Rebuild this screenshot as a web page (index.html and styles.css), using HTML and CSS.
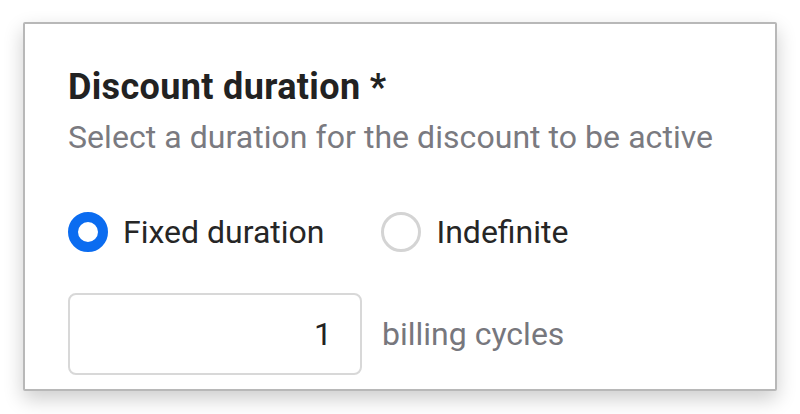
FILE: index.html
```html
<!DOCTYPE html>
<html>
<head>
<meta charset="utf-8">
<link rel="stylesheet" href="styles.css">
</head>
<body>
<div class="card">
  <h2 class="title">Discount duration *</h2>
  <p class="subtitle">Select a duration for the discount to be active</p>
  <div class="radios">
    <label class="radio">
      <span class="dot dot-on"></span>
      <span class="radio-label">Fixed duration</span>
    </label>
    <label class="radio">
      <span class="dot"></span>
      <span class="radio-label">Indefinite</span>
    </label>
  </div>
  <div class="cycles">
    <div class="input">1</div>
    <span class="unit">billing cycles</span>
  </div>
</div>
</body>
</html>
```
FILE: styles.css
```css
html, body {
  margin: 0;
  padding: 0;
  background: #ffffff;
}
body {
  font-family: Roboto, "Liberation Sans", sans-serif;
  padding: 22px 23px 0 23px;
  height: 414px;
  box-sizing: border-box;
  overflow: hidden;
}
.card {
  width: 754px;
  height: 369px;
  box-sizing: border-box;
  border: 2px solid #b8b8b8;
  border-radius: 2px;
  background: #fff;
  box-shadow: 0 8px 20px rgba(0,0,0,0.2);
  padding: 42px 43px 0 43px;
}
.title {
  margin: 0;
  font-size: 36px;
  font-weight: 700;
  color: #222;
  line-height: 42px;
  letter-spacing: 0.35px;
}
.subtitle {
  margin: 10px 0 0 0;
  font-size: 32px;
  color: #7a7a80;
  line-height: 38px;
  letter-spacing: 0.05px;
}
.radios {
  display: flex;
  gap: 57px;
  margin-top: 56px;
  align-items: center;
}
.radio {
  display: flex;
  align-items: center;
  gap: 15px;
}
.dot {
  width: 40px;
  height: 40px;
  box-sizing: border-box;
  border-radius: 50%;
  border: 3px solid #d4d4d4;
  background: #fff;
}
.dot-on {
  border: 10px solid #0b6cf0;
}
.radio-label {
  font-size: 32px;
  color: #262626;
  line-height: 38px;
}
.cycles {
  display: flex;
  align-items: center;
  gap: 20px;
  margin-top: 41px;
}
.input {
  width: 294px;
  height: 82px;
  box-sizing: border-box;
  border: 2px solid #d8d8d8;
  border-radius: 8px;
  font-size: 32px;
  color: #222;
  text-align: right;
  padding-right: 28px;
  line-height: 78px;
}
.unit {
  font-size: 32px;
  color: #77777d;
}
```
